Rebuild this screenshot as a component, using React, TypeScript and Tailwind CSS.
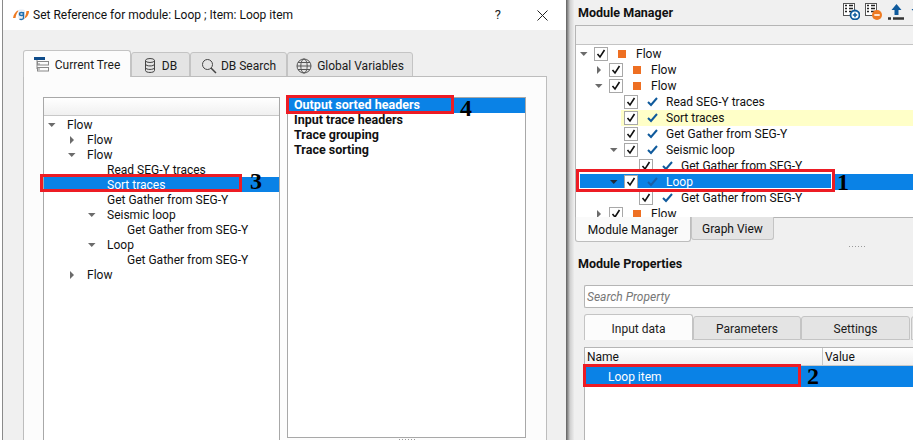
import { ReactNode } from "react";

interface Row {
  label: string;
  depth: number;
  arrow?: "open" | "closed";
  selected?: boolean;
}

const refRows: Row[] = [
  { label: "Flow", depth: 0, arrow: "open" },
  { label: "Flow", depth: 1, arrow: "closed" },
  { label: "Flow", depth: 1, arrow: "open" },
  { label: "Read SEG-Y traces", depth: 2 },
  { label: "Sort traces", depth: 2, selected: true },
  { label: "Get Gather from SEG-Y", depth: 2 },
  { label: "Seismic loop", depth: 2, arrow: "open" },
  { label: "Get Gather from SEG-Y", depth: 3 },
  { label: "Loop", depth: 2, arrow: "open" },
  { label: "Get Gather from SEG-Y", depth: 3 },
  { label: "Flow", depth: 1, arrow: "closed" },
];

interface ModuleRow {
  label: string;
  depth: number;
  arrow?: "open" | "closed";
  kind: "flow" | "tick";
  state?: "selected" | "hint";
}

const moduleRows: ModuleRow[] = [
  { label: "Flow", depth: 0, arrow: "open", kind: "flow" },
  { label: "Flow", depth: 1, arrow: "closed", kind: "flow" },
  { label: "Flow", depth: 1, arrow: "open", kind: "flow" },
  { label: "Read SEG-Y traces", depth: 2, kind: "tick" },
  { label: "Sort traces", depth: 2, kind: "tick", state: "hint" },
  { label: "Get Gather from SEG-Y", depth: 2, kind: "tick" },
  { label: "Seismic loop", depth: 2, arrow: "open", kind: "tick" },
  { label: "Get Gather from SEG-Y", depth: 3, kind: "tick" },
  { label: "Loop", depth: 2, arrow: "open", kind: "tick", state: "selected" },
  { label: "Get Gather from SEG-Y", depth: 3, kind: "tick" },
  { label: "Flow", depth: 1, arrow: "closed", kind: "flow" },
];

function Arrow({ dir, dark }: { dir?: "open" | "closed"; dark?: boolean }) {
  if (!dir) return null;
  const fill = dark ? "#1f2a38" : "#6b6b6b";
  return (
    <svg width="8" height="8" viewBox="0 0 8 8" className="block">
      {dir === "open" ? (
        <path d="M0 2h7.5L3.75 6z" fill={fill} />
      ) : (
        <path d="M2 0v8l4-4z" fill={fill} />
      )}
    </svg>
  );
}

function Check({ color = "#0f5a9c" }: { color?: string }) {
  return (
    <svg width="11" height="10" viewBox="0 0 11 10" className="block">
      <path d="M1 5l3 3 6-7" fill="none" stroke={color} strokeWidth="2" />
    </svg>
  );
}

function CheckBox() {
  return (
    <div className="w-[14px] h-[14px] border border-[#a8a8a8] bg-white flex items-center justify-center shrink-0">
      <svg width="10" height="10" viewBox="0 0 10 10" className="block">
        <path d="M1.500 5l2.500 3 4.500-7" fill="none" stroke="#111" strokeWidth="1.600" />
      </svg>
    </div>
  );
}

function GridIcon({ children }: { children: ReactNode }) {
  return (
    <svg width="17" height="17" viewBox="0 0 17 17" className="block">
      <rect x="0.500" y="0.500" width="11" height="12" fill="#fff" stroke="#555" />
      <path d="M2 2.500h2M6 2.500h4M2 5.500h2M6 5.500h4M2 8.500h2M6 8.500h4" stroke="#222" strokeWidth="1.500" />
      {children}
    </svg>
  );
}

function Tab({
  active,
  className,
  children,
}: {
  active?: boolean;
  className?: string;
  children?: ReactNode;
}) {
  return (
    <div
      className={`flex items-center justify-center shrink-0 pt-[2px] border border-[#c4c4c4] rounded-t-[3px] text-[12px] text-[#1b1b1b] ${
        active ? "bg-[#fcfcfc] border-b-0 relative z-10" : "bg-[#e4e4e4] mt-[2px]"
      } ${className ?? ""}`}
    >
      {children}
    </div>
  );
}

function Marker({ className, n, numClass }: { className: string; n: string; numClass: string }) {
  return (
    <>
      <div className={`absolute border-[3px] border-[#ed1c24] ${className}`} />
      <div
        className={`absolute font-['Liberation_Serif',serif] font-bold text-[24px] leading-none text-black ${numClass}`}
      >
        {n}
      </div>
    </>
  );
}

function Dots() {
  return (
    <div className="flex gap-[2px]">
      {[0, 1, 2, 3, 4, 5].map((i) => (
        <div key={i} className="w-[1px] h-[1px] bg-[#9a9a9a]" />
      ))}
    </div>
  );
}

export default function App() {
  return (
    <div className="relative w-[913px] h-[440px] overflow-hidden flex bg-[#f0f0f0] font-['Roboto',sans-serif]">
      {/* Left dialog */}
      <div className="w-[566px] shrink-0 pl-[2px] bg-white">
        <div className="h-full flex flex-col border-l border-[#8a8a8a] bg-[#f0f0f0]">
          <div className="h-[30px] bg-white flex items-center pl-[9px] pr-[18px] shrink-0">
            <svg width="18" height="14" viewBox="0 0 18 14" className="block mr-[3px]">
              <path d="M1 10C1.500 6 4 3 7 2C5 4.500 4 7 3.500 10z" fill="#ee7a22" />
              <path d="M17 3c0 4-2.500 7-6 8.500C13 9.500 14 7 14.500 3z" fill="#ee7a22" />
              <rect x="6" y="1.500" width="7" height="9.500" rx="2" fill="#e8eef5" />
              <path d="M11.500 4v6c0 1.500-2.500 2-4 1M11.500 6c0-2-4-2-4 0s4 2 4 0" fill="none" stroke="#1f6fb0" strokeWidth="1.400" />
            </svg>
            <span className="text-[12px] text-[#111]">Set Reference for module: Loop ; Item: Loop item</span>
            <span className="ml-auto text-[13px] text-[#222] mr-[36px]">?</span>
            <svg width="11" height="11" viewBox="0 0 11 11" className="block">
              <path d="M0.500 0.500l10 10M10.500 0.500l-10 10" stroke="#222" strokeWidth="1" />
            </svg>
          </div>

          <div className="flex-1 min-h-0 pl-[20px] pr-[19px] pt-[20px] flex flex-col">
            <div className="flex h-[27px] shrink-0 -mb-px items-stretch">
              <Tab active className="w-[108px] gap-[5px]">
                <svg width="16" height="16" viewBox="0 0 16 16" className="block">
                  <path d="M0 0h11v3H0z" fill="#0f4c8a" />
                  <path d="M3 3v9h3M3 7h3" fill="none" stroke="#888" />
                  <rect x="3.500" y="4.500" width="11" height="3.500" fill="none" stroke="#888" />
                  <rect x="3.500" y="10.500" width="11" height="3.500" fill="none" stroke="#888" />
                </svg>
                Current Tree
              </Tab>
              <Tab className="w-[59px] gap-[6px]">
                <svg width="12" height="15" viewBox="0 0 12 15" className="block">
                  <ellipse cx="6" cy="2.500" rx="4.500" ry="2" fill="none" stroke="#444" />
                  <path d="M1.500 2.500v10c0 2.600 9 2.600 9 0v-10M1.500 6c0 2.600 9 2.600 9 0M1.500 9.500c0 2.600 9 2.600 9 0" fill="none" stroke="#444" />
                </svg>
                DB
              </Tab>
              <Tab className="w-[97px] gap-[4px]">
                <svg width="16" height="16" viewBox="0 0 16 16" className="block">
                  <circle cx="6.500" cy="6.500" r="5" fill="none" stroke="#444" />
                  <path d="M10 10l5 5" stroke="#444" strokeWidth="1.500" />
                </svg>
                DB Search
              </Tab>
              <Tab className="w-[126px] gap-[5px]">
                <svg width="16" height="16" viewBox="0 0 16 16" className="block">
                  <circle cx="8" cy="8" r="7" fill="none" stroke="#555" />
                  <ellipse cx="8" cy="8" rx="3.200" ry="7" fill="none" stroke="#555" />
                  <path d="M1 8h14M2 4.500h12M2 11.500h12" stroke="#555" />
                </svg>
                Global Variables
              </Tab>
            </div>

            <div className="flex-1 min-h-0 border border-[#bdbdbd] border-b-0 bg-[#fcfcfc] pt-[20px] pl-[19px] pr-[19px] flex gap-[7px]">
              <div className="w-[237px] border border-[#a8a8a8] border-b-0 bg-white flex flex-col">
                <div className="h-[18px] border-b border-[#c8c8c8] bg-gradient-to-b from-[#ffffff] to-[#f0f0f0] shrink-0" />
                <div className="pt-[1px]">
                  {refRows.map((row, i) => (
                    <div
                      key={i}
                      className={`h-[15px] flex items-center text-[12px] leading-none ${
                        row.selected ? "bg-[#0a82e6] text-white" : "text-[#111]"
                      }`}
                    >
                      <div className="w-[23px] shrink-0" style={{ marginLeft: row.depth * 20 }}>
                        <div className="pl-[4px]">
                          <Arrow dir={row.arrow} />
                        </div>
                      </div>
                      {row.label}
                    </div>
                  ))}
                </div>
              </div>
              <div className="flex flex-col">
                <div className="w-[239px] h-[341px] border border-[#a8a8a8] bg-white text-[12.500px] font-bold leading-none text-[#111]">
                  <div className="h-[15px] flex items-center pl-[6px] bg-[#0a82e6] text-white">Output sorted headers</div>
                  <div className="h-[15px] flex items-center pl-[6px]">Input trace headers</div>
                  <div className="h-[15px] flex items-center pl-[6px]">Trace grouping</div>
                  <div className="h-[15px] flex items-center pl-[6px]">Trace sorting</div>
                </div>
                <div className="flex justify-center pt-[1px]">
                  <Dots />
                </div>
              </div>
            </div>
          </div>
        </div>
      </div>

      {/* Window shadow between the two panes */}
      <div className="w-[8px] shrink-0 bg-gradient-to-r from-[#5f5f5f] via-[#cfcfcf] to-[#ececec]" />

      {/* Right dock */}
      <div className="flex-1 min-w-0 flex flex-col bg-[#f0f0f0] pl-[1px]">
        <div className="h-[25px] flex items-center shrink-0 pl-[3px] pt-[1px]">
          <span className="text-[12.500px] font-bold text-[#111]">Module Manager</span>
          <div className="ml-auto flex items-start -mr-[12px] pb-[3px]">
            <GridIcon>
              <circle cx="12" cy="12" r="4.500" fill="#fff" stroke="#0f5a9c" strokeWidth="1.800" />
              <path d="M9.800 12h4.400M12 9.800v4.400" stroke="#0f5a9c" strokeWidth="1.500" />
            </GridIcon>
            <div className="ml-[5px]">
              <GridIcon>
                <circle cx="12" cy="12" r="5" fill="#ee7a22" />
                <path d="M9.300 12h5.400" stroke="#fff" strokeWidth="1.600" />
              </GridIcon>
            </div>
            <svg width="17" height="17" viewBox="0 0 17 17" className="block ml-[6px]">
              <path d="M8.500 1l5 6h-3v5h-4V7h-3z" fill="#0f5a9c" />
              <path d="M0 15.500h3M5 15.500h11" stroke="#333" strokeWidth="2.500" />
            </svg>
            <svg width="17" height="17" viewBox="0 0 17 17" className="block ml-[3px]">
              <path d="M8.500 12l-5-6h3V1h4v5h3z" fill="#0f5a9c" />
            </svg>
          </div>
        </div>

        <div className="h-[193px] shrink-0 border-y border-l border-[#b5b5b5] bg-white overflow-hidden">
          <div className="h-[19px] bg-[#f2f2f2] border-b border-[#c4c4c4]" />
          <div className="pt-[1px]">
            {moduleRows.map((row, i) => (
              <div
                key={i}
                className={`h-[16px] flex items-center text-[12px] leading-none ${
                  row.state === "selected" ? "bg-[#0a82e6] text-white" : "text-[#111]"
                }`}
              >
                {row.state === "hint" ? (
                  // the yellow band starts just before the checkbox, not at the row's arrow
                  <div className="h-full flex items-center flex-1 ml-[45px] pl-[3px] bg-[#ffffc8]">
                    <CheckBox />
                    <div className="ml-[9px] mr-[8px] shrink-0">
                      <Check />
                    </div>
                    {row.label}
                  </div>
                ) : (
                  <div className="h-full flex items-center flex-1" style={{ marginLeft: row.depth * 15 }}>
                    <div className="w-[18px] shrink-0 pl-[4px]">
                      <Arrow dir={row.arrow} dark={row.state === "selected"} />
                    </div>
                    <CheckBox />
                    {row.kind === "flow" ? (
                      <div className="w-[8px] h-[8px] bg-[#ee6f22] ml-[10px] mr-[10px] shrink-0" />
                    ) : (
                      <div className="ml-[9px] mr-[8px] shrink-0">
                        <Check color={row.state === "selected" ? "#1a5fa8" : "#0f5a9c"} />
                      </div>
                    )}
                    {row.label}
                  </div>
                )}
              </div>
            ))}
          </div>
        </div>

        <div className="flex h-[25px] shrink-0 -mt-px items-start">
          <div className="w-[116px] h-[25px] pt-[1px] bg-[#fafafa] border border-t-0 border-[#bdbdbd] rounded-b-[3px] flex items-center justify-center text-[12px] text-[#111]">
            Module Manager
          </div>
          <div className="w-[83px] h-[23px] pt-[1px] bg-[#e4e4e4] border border-t-0 border-[#c4c4c4] rounded-b-[3px] flex items-center justify-center text-[12px] text-[#111]">
            Graph View
          </div>
        </div>

        <div className="h-[5px] shrink-0 flex items-end justify-end pr-[48px]">
          <Dots />
        </div>
        <div className="h-[14px] mt-[10px] shrink-0 pl-[3px] flex items-center text-[12.500px] font-bold text-[#111]">
          Module Properties
        </div>

        <div className="mt-[14px] ml-[9px] h-[23px] shrink-0 border border-[#b5b5b5] border-r-0 rounded-l-[2px] bg-white flex items-center pl-[2px] text-[12px] italic text-[#777]">
          Search Property
        </div>

        <div className="mt-[6px] ml-[9px] flex h-[26px] shrink-0 -mb-px items-stretch">
          <Tab active className="w-[109px]">Input data</Tab>
          <Tab className="w-[108px]">Parameters</Tab>
          <Tab className="w-[109px]">Settings</Tab>
          <Tab className="w-[20px] ml-[1px]" />
        </div>

        <div className="flex-1 min-h-0 ml-[9px] mt-[8px] border-l border-t border-[#b5b5b5] bg-white">
          <div className="h-[18px] flex text-[12px] text-[#111] bg-gradient-to-b from-white to-[#f0f0f0] border-b border-[#c8c8c8]">
            <div className="w-[238px] pl-[2px] border-r border-[#c8c8c8] flex items-center">Name</div>
            <div className="pl-[2px] flex items-center">Value</div>
          </div>
          <div className="h-[21px] bg-[#0a82e6] text-white text-[12px] flex items-center pl-[23px]">Loop item</div>
        </div>
      </div>

      {/* Annotations over the screenshot */}
      <Marker className="left-[286px] top-[95px] w-[168px] h-[19px]" n="4" numClass="left-[460px] top-[96px]" />
      <Marker className="left-[40px] top-[174px] w-[202px] h-[18px]" n="3" numClass="left-[250px] top-[169px]" />
      <Marker
        className="left-[576px] top-[169px] w-[259px] h-[23px] shadow-[inset_0_0_0_1px_#fff]"
        n="1"
        numClass="left-[837px] top-[170px]"
      />
      <Marker className="left-[583px] top-[364px] w-[218px] h-[23px]" n="2" numClass="left-[807px] top-[364px]" />
    </div>
  );
}
